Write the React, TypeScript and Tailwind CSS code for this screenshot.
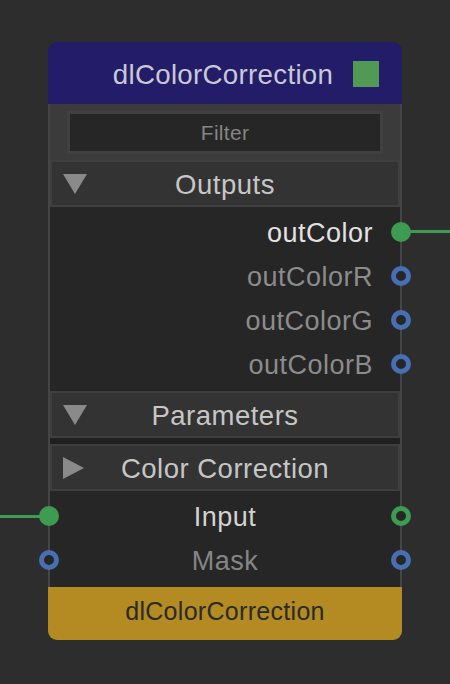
import React from "react";

const font = { fontFamily: '"Liberation Sans", Arial, sans-serif' };

function Port({ kind, side }: { kind: "filled" | "ringGreen" | "ringBlue"; side: "left" | "right" }) {
  const pos = side === "right" ? "right-[-11px]" : "left-[-11px]";
  if (kind === "filled") {
    return <div className={`absolute ${pos} top-1/2 -translate-y-1/2 w-[20px] h-[20px] rounded-full bg-[#3e9b52] z-10`} />;
  }
  const c = kind === "ringGreen" ? "border-[#3e9b52]" : "border-[#4670b3]";
  return (
    <div
      className={`absolute ${pos} top-1/2 -translate-y-1/2 w-[20px] h-[20px] rounded-full border-[5px] ${c} bg-[#262626] z-10`}
    />
  );
}

function SectionHeader({ label, open }: { label: string; open: boolean }) {
  return (
    <div className="relative h-[47px] bg-[#333333] border-2 border-[#3f3f3f] flex items-center justify-center">
      <div className="absolute left-[11px] top-1/2 -translate-y-1/2">
        {open ? (
          <svg width="24" height="20" viewBox="0 0 24 20">
            <polygon points="0,0 24,0 12,20" fill="#8a8a8a" />
          </svg>
        ) : (
          <svg width="21" height="22" viewBox="0 0 21 22">
            <polygon points="0,0 21,11 0,22" fill="#8a8a8a" />
          </svg>
        )}
      </div>
      <span className="text-[27.5px] text-[#c6c6c6] tracking-[0.5px] pt-[3px]">{label}</span>
    </div>
  );
}

function OutRow({ label, bright, port }: { label: string; bright?: boolean; port: "filled" | "ringBlue" }) {
  return (
    <div className="relative h-[44px] flex items-center justify-end pr-[27px]">
      <span className={`text-[27px] tracking-[0.5px] pt-[2px] ${bright ? "text-[#e2e2e2]" : "text-[#8c8c8c]"}`}>{label}</span>
      <Port kind={port} side="right" />
    </div>
  );
}

export default function App() {
  return (
    <div className="relative w-[450px] h-[684px] bg-[#2d2d2d] overflow-hidden pt-[42px] pl-[48px]" style={font}>
      {/* wires */}
      <div className="absolute left-[405px] top-[230px] w-[45px] h-[3px] bg-[#3e9b52]" />
      <div className="absolute left-0 top-[515px] w-[45px] h-[3px] bg-[#3e9b52]" />

      <div className="relative w-[354px] flex flex-col">
        {/* header */}
        <div className="relative h-[62px] bg-[#231c69] rounded-t-[9px] flex items-center justify-center pr-[4px]">
          <span className="text-[27.7px] text-[#c9c8d4] tracking-[0.3px] pt-[3px]">dlColorCorrection</span>
          <div className="absolute right-[23px] top-[19px] w-[26px] h-[26px] bg-[#519a55]" />
        </div>

        {/* body */}
        <div className="border-x-2 border-[#454545] bg-[#262626] flex flex-col">
          <div className="h-[56px] bg-[#3b3b3b] flex items-center justify-center">
            <div className="w-[316px] h-[43px] bg-[#262626] border-[3px] border-[#404040] flex items-center justify-center">
              <span className="text-[21px] text-[#858585] tracking-[0.3px] pt-[1px]">Filter</span>
            </div>
          </div>

          <SectionHeader label="Outputs" open />
          <div className="pt-[3px] pb-[4px] flex flex-col">
            <OutRow label="outColor" bright port="filled" />
            <OutRow label="outColorR" port="ringBlue" />
            <OutRow label="outColorG" port="ringBlue" />
            <OutRow label="outColorB" port="ringBlue" />
          </div>

          <div className="h-[1px] bg-[#222222]" />
          <SectionHeader label="Parameters" open />
          <div className="h-[6px] bg-[#202020]" />
          <SectionHeader label="Color Correction" open={false} />

          <div className="pt-[3px] pb-[5px] flex flex-col">
            <div className="relative h-[44px] flex items-center justify-center">
              <Port kind="filled" side="left" />
              <span className="text-[27px] text-[#d2d2d2] tracking-[0.5px] pt-[2px]">Input</span>
              <Port kind="ringGreen" side="right" />
            </div>
            <div className="relative h-[44px] flex items-center justify-center">
              <Port kind="ringBlue" side="left" />
              <span className="text-[27px] text-[#858585] tracking-[0.5px] pt-[2px]">Mask</span>
              <Port kind="ringBlue" side="right" />
            </div>
          </div>
        </div>

        {/* footer */}
        <div className="h-[53px] bg-[#b38b22] rounded-b-[9px] flex items-center justify-center">
          <span className="text-[25px] text-[#2a2a2a] tracking-[0.3px] pb-[3px]">dlColorCorrection</span>
        </div>
      </div>
    </div>
  );
}
